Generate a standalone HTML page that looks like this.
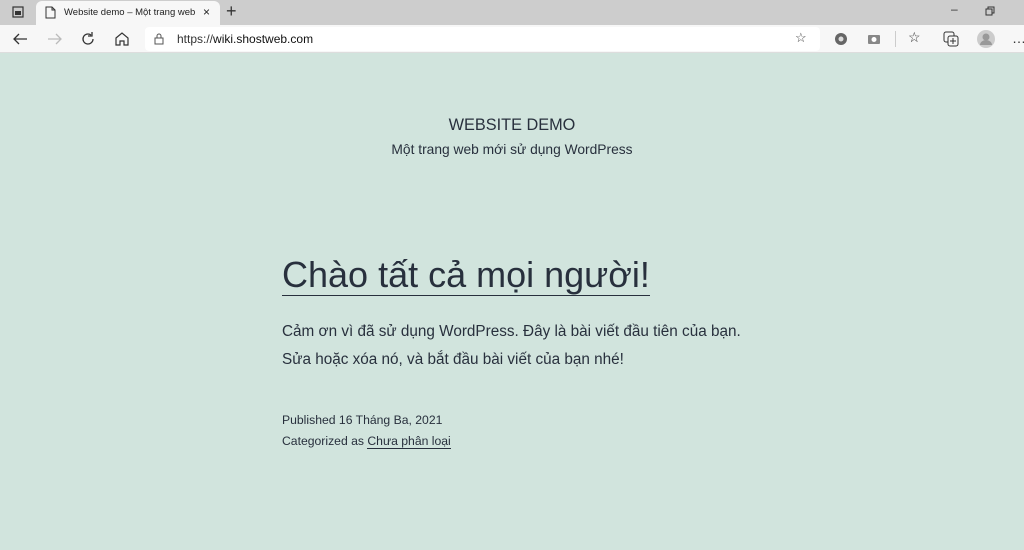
<!DOCTYPE html>
<html><head><meta charset="utf-8"><style>
*{margin:0;padding:0;box-sizing:border-box}
body{width:1024px;height:550px;overflow:hidden;background:#d1e4dd;font-family:"Liberation Sans",sans-serif;position:relative;color:#28303d}
.tabs{position:absolute;left:0;top:0;width:1024px;height:25px;background:#cdcdcd}
.tab{position:absolute;left:36px;top:1px;width:184px;height:24px;background:#f7f7f7;border-radius:6px 6px 0 0;font-size:9.5px;color:#222}
.tb{position:absolute;left:0;top:25px;width:1024px;height:28px;background:#f7f7f7;border-bottom:1px solid #ddd}
.addr{position:absolute;left:145px;top:2px;width:675px;height:24px;background:#fff;border-radius:4px;font-size:12px;color:#333}
.a{position:absolute;text-align:center;width:1024px;left:0}
svg{position:absolute}
</style></head><body>
<div class="tabs">
<svg style="left:12px;top:6px" width="12" height="12"><rect x="1" y="1" width="10" height="10" fill="none" stroke="#333" stroke-width="1.2"/><rect x="3" y="5" width="6" height="4" fill="#333"/></svg>
<div class="tab"><svg style="left:9px;top:5px" width="11" height="13"><path d="M1 1h6l3 3v8H1z M7 1v3h3" fill="none" stroke="#333"/></svg><span style="position:absolute;left:28px;top:6px">Website demo – Một trang web</span><span style="position:absolute;left:167px;top:4px;font-size:12px">×</span></div>
<span style="position:absolute;left:226px;top:1px;font-size:18px;color:#333">+</span>
<span style="position:absolute;left:951px;top:2px;font-size:12px;color:#333">–</span>
<svg style="left:985px;top:6px" width="10" height="10"><rect x="1" y="3" width="6" height="6" fill="none" stroke="#333"/><path d="M3 3V1h6v6H7" fill="none" stroke="#333"/></svg>
</div>
<div class="tb">
<svg style="left:12px;top:7px" width="16" height="14"><path d="M15 7H2M7 2L2 7l5 5" fill="none" stroke="#333" stroke-width="1.3"/></svg>
<svg style="left:47px;top:7px" width="16" height="14"><path d="M1 7h13M9 2l5 5-5 5" fill="none" stroke="#bbb" stroke-width="1.3"/></svg>
<svg style="left:80px;top:6px" width="16" height="16"><path d="M13 8a5 5 0 1 1-2-4M12 1v4H8" fill="none" stroke="#333" stroke-width="1.3"/></svg>
<svg style="left:114px;top:6px" width="16" height="16"><path d="M2 7L8 2l6 5v7H10v-4H6v4H2z" fill="none" stroke="#333" stroke-width="1.2"/></svg>
<div class="addr"><svg style="left:9px;top:6px" width="10" height="12"><rect x="1" y="5" width="8" height="6" fill="none" stroke="#555"/><path d="M3 5V3a2 2 0 0 1 4 0v2" fill="none" stroke="#555"/></svg><span style="position:absolute;left:32px;top:5px">https://<b style="font-weight:normal;color:#111">wiki.shostweb.com</b></span>
<span style="position:absolute;left:650px;top:3px;font-size:13px;color:#444">☆</span></div>
<svg style="left:833px;top:6px" width="16" height="16"><circle cx="8" cy="8" r="6" fill="#666"/><circle cx="8" cy="8" r="2.5" fill="#ddd"/></svg>
<svg style="left:866px;top:7px" width="16" height="14"><rect x="2" y="3" width="12" height="9" rx="1" fill="#888"/><circle cx="8" cy="7.5" r="2.5" fill="#fff"/></svg>
<div style="position:absolute;left:895px;top:6px;width:1px;height:16px;background:#ccc"></div>
<span style="position:absolute;left:908px;top:4px;font-size:14px;color:#333">☆</span>
<svg style="left:943px;top:6px" width="16" height="16"><rect x="1" y="1" width="10" height="10" rx="2" fill="none" stroke="#333"/><rect x="5" y="5" width="10" height="10" rx="2" fill="#f7f7f7" stroke="#333"/><path d="M10 7v6M7 10h6" stroke="#333"/></svg>
<svg style="left:976px;top:4px" width="20" height="20"><circle cx="10" cy="10" r="9" fill="#ccc"/><circle cx="10" cy="8" r="3.5" fill="#999"/><path d="M4 16a6 5 0 0 1 12 0" fill="#999"/></svg>
<span style="position:absolute;left:1012px;top:5px;font-size:14px;color:#333">…</span>
</div>
<div class="a" style="top:116px;font-size:16.3px">WEBSITE DEMO</div>
<div class="a" style="top:142px;font-size:13.8px">Một trang web mới sử dụng WordPress</div>
<div style="position:absolute;left:282px;top:254px;font-size:36px;line-height:41px;border-bottom:1px solid #28303d;white-space:nowrap">Chào tất cả mọi người!</div>
<div style="position:absolute;left:282px;top:318px;font-size:15.3px;line-height:28px;white-space:nowrap">Cảm ơn vì đã sử dụng WordPress. Đây là bài viết đầu tiên của bạn.<br>Sửa hoặc xóa nó, và bắt đầu bài viết của bạn nhé!</div>
<div style="position:absolute;left:282px;top:410px;font-size:12.2px;line-height:21px;white-space:nowrap">Published 16 Tháng Ba, 2021<br>Categorized as <span style="border-bottom:1px solid #28303d">Chưa phân loại</span></div>
</body></html>
